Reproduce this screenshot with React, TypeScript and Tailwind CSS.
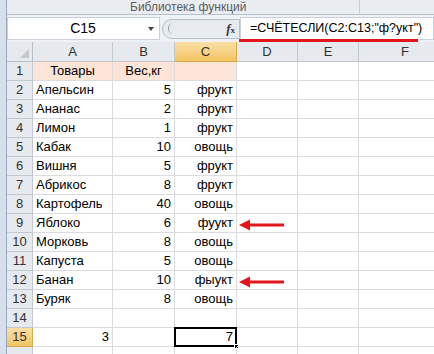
import React from 'react'

const font = { fontFamily: '"Liberation Sans", Arial, sans-serif' }

const data: [string, string, string][] = [
  ['Товары', 'Вес,кг', ''],
  ['Апельсин', '5', 'фрукт'],
  ['Ананас', '2', 'фрукт'],
  ['Лимон', '1', 'фрукт'],
  ['Кабак', '10', 'овощь'],
  ['Вишня', '5', 'фрукт'],
  ['Абрикос', '8', 'фрукт'],
  ['Картофель', '40', 'овощь'],
  ['Яблоко', '6', 'фуукт'],
  ['Морковь', '8', 'овощь'],
  ['Капуста', '5', 'овощь'],
  ['Банан', '10', 'фыукт'],
  ['Буряк', '8', 'овощь'],
  ['', '', ''],
  ['3', '', '7'],
  ['', '', ''],
]

function Arrow() {
  return (
    <svg className="absolute left-[2px] top-[5px]" width="46" height="12" viewBox="0 0 46 12">
      <line x1="8" y1="6" x2="45" y2="6" stroke="#e3161b" strokeWidth="3" />
      <polygon points="0,6 11,0.5 11,11.5" fill="#e3161b" />
    </svg>
  )
}

export default function App() {
  return (
    <div style={font} className="flex w-[434px] h-[354px] overflow-hidden bg-white text-[13px] text-black">
      {/* left window frame */}
      <div className="w-[7px] shrink-0 bg-[#d6dfeb] border-r border-[#97a9c2]" />

      <div className="flex flex-col flex-1 min-w-0">
        {/* ribbon group label */}
        <div className="h-[15px] shrink-0 flex bg-[#e9edf2] border-b border-[#b9c1cc] text-[12px] text-[#5c5c5c] leading-[14px]">
          <div className="w-[353px] shrink-0 pl-[123px] border-r border-[#c6ccd4] whitespace-nowrap">Библиотека функций</div>
          <div className="flex-1" />
        </div>

        {/* formula bar */}
        <div className="relative h-[27px] shrink-0 flex items-center bg-[#eef1f5]">
          <div className="h-[23px] w-[153px] shrink-0 flex items-center bg-white border border-[#c9d0d9]">
            <div className="flex-1 text-center text-[14px] pl-[10px]">C15</div>
            <div className="w-0 h-0 mr-[5px] border-l-[3px] border-r-[3px] border-t-[4px] border-l-transparent border-r-transparent border-t-[#444]" />
          </div>
          <div className="ml-[2px] h-[20px] w-[78px] shrink-0 flex items-center rounded-l-[10px] border border-[#b7c0cc] bg-[#e7ebf0]">
            <div className="ml-[5px] w-[5px] h-[11px] rounded-l-full border-l border-[#9aa3ae]" />
            <div className="ml-auto mr-[4px] italic font-bold text-[13px] text-[#3a3a3a]" style={{ fontFamily: '"Liberation Serif", serif' }}>
              f<span className="text-[9px] not-italic">x</span>
            </div>
          </div>
          <div className="h-[23px] flex-1 min-w-0 flex items-center bg-white border border-[#c9d0d9] pl-[9px] text-[12.5px] whitespace-nowrap overflow-hidden">
            =СЧЁТЕСЛИ(C2:C13;"ф?укт")
          </div>
          <div className="absolute left-[232px] top-[24px] w-[179px] h-[3px] bg-[#e3161b]" />
        </div>

        {/* column headers */}
        <div className="flex h-[20px] shrink-0 leading-[19px] text-[#333]">
          <div className="relative w-[26px] shrink-0 bg-[#e6e9ed] border-r border-b border-[#b8bfc8]">
            <svg className="absolute right-[3px] bottom-[3px]" width="9" height="9"><polygon points="9,0 9,9 0,9" fill="#c3c8cf" /></svg>
          </div>
          <div className="w-[80px] shrink-0 text-center bg-[#e6e9ed] border-r border-b border-[#c3c9d1]">A</div>
          <div className="w-[62px] shrink-0 text-center bg-[#e6e9ed] border-r border-b border-[#c3c9d1]">B</div>
          <div className="w-[62px] shrink-0 text-center bg-gradient-to-b from-[#fbe0a6] to-[#f2c462] border-r border-b border-[#d9a84a]">C</div>
          <div className="w-[61px] shrink-0 text-center bg-[#e6e9ed] border-r border-b border-[#c3c9d1]">D</div>
          <div className="w-[61px] shrink-0 text-center bg-[#e6e9ed] border-r border-b border-[#c3c9d1]">E</div>
          <div className="flex-1 pl-[17px] text-center bg-[#e6e9ed] border-b border-[#c3c9d1]">F</div>
        </div>

        {/* rows */}
        {data.map((r, i) => {
          const n = i + 1
          const head = n === 1
          const sel = n === 15
          const peach = head ? 'bg-[#fce4d6]' : ''
          return (
            <div key={n} className="flex h-[19px] shrink-0 leading-[18px]">
              <div
                className={`w-[26px] shrink-0 text-center text-[#333] border-r border-b ${
                  sel ? 'bg-gradient-to-b from-[#fbe0a6] to-[#f2c462] border-[#d9a84a]' : 'bg-[#e6e9ed] border-[#c3c9d1]'
                }`}
              >
                {n < 16 ? n : ''}
              </div>
              <div className={`w-[80px] shrink-0 border-r border-b border-[#dadcdf] px-[3px] whitespace-nowrap ${peach} ${head ? 'text-center' : n === 15 ? 'text-right' : ''}`}>
                {r[0]}
              </div>
              <div className={`w-[62px] shrink-0 border-r border-b border-[#dadcdf] px-[3px] whitespace-nowrap ${peach} ${head ? 'text-center' : 'text-right'}`}>
                {r[1]}
              </div>
              <div className={`relative w-[62px] shrink-0 border-r border-b border-[#dadcdf] px-[3px] text-right whitespace-nowrap ${peach}`}>
                {r[2]}
                {sel && (
                  <div className="absolute -left-[1px] -top-[1px] w-[63px] h-[20px] border-2 border-black">
                    <div className="absolute -right-[4px] -bottom-[4px] w-[5px] h-[5px] bg-black border border-white" />
                  </div>
                )}
              </div>
              <div className="relative w-[61px] shrink-0 border-r border-b border-[#dadcdf]">
                {(n === 9 || n === 12) && <Arrow />}
              </div>
              <div className="w-[61px] shrink-0 border-r border-b border-[#dadcdf]" />
              <div className="flex-1 border-b border-[#dadcdf]" />
            </div>
          )
        })}
      </div>
    </div>
  )
}
